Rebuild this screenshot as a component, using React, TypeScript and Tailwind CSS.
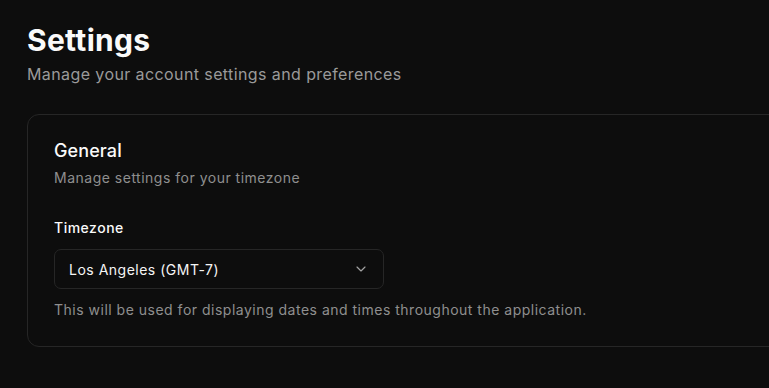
import React from "react";
import { ChevronDown } from "lucide-react";

export default function App() {
  return (
    <div
      className="min-h-screen w-full overflow-hidden bg-[#0d0d0d] pl-[27px] pt-[22px] text-white"
      style={{ fontFamily: "Inter, 'Noto Sans', sans-serif" }}
    >
      <h1 className="text-[30px] font-bold leading-[36px] tracking-[0.3px] text-[#fafafa]">Settings</h1>
      <p className="mt-[4px] text-[16px] leading-[24px] tracking-[0.4px] text-[#9a9a9a]">
        Manage your account settings and preferences
      </p>

      <div className="mt-[28px] w-[820px] rounded-[12px] border border-[#262626] bg-[#0d0d0d] px-[26px] pb-[26px] pt-[22px]">
        <h2 className="text-[18px] font-medium leading-[28px] tracking-[0.1px] text-[#fafafa]">General</h2>
        <p className="mt-[3px] text-[14px] leading-[20px] tracking-[0.5px] text-[#8f8f8f]">
          Manage settings for your timezone
        </p>

        <div className="mt-[30px]">
          <label className="block text-[14px] font-medium leading-[20px] tracking-[0.5px] text-[#fafafa]">
            Timezone
          </label>
          <button
            type="button"
            className="mt-[11px] flex h-[40px] w-[330px] items-center justify-between rounded-[7px] border border-[#262626] bg-[#0d0d0d] pl-[14px] pr-[14px] text-left text-[14px] tracking-[0.5px] text-[#f5f5f5]"
          >
            <span>Los Angeles (GMT-7)</span>
            <ChevronDown className="h-4 w-4 text-[#a3a3a3]" strokeWidth={1.75} />
          </button>
          <p className="mt-[11px] text-[14px] leading-[20px] tracking-[0.5px] text-[#8f8f8f]">
            This will be used for displaying dates and times throughout the application.
          </p>
        </div>
      </div>
    </div>
  );
}
